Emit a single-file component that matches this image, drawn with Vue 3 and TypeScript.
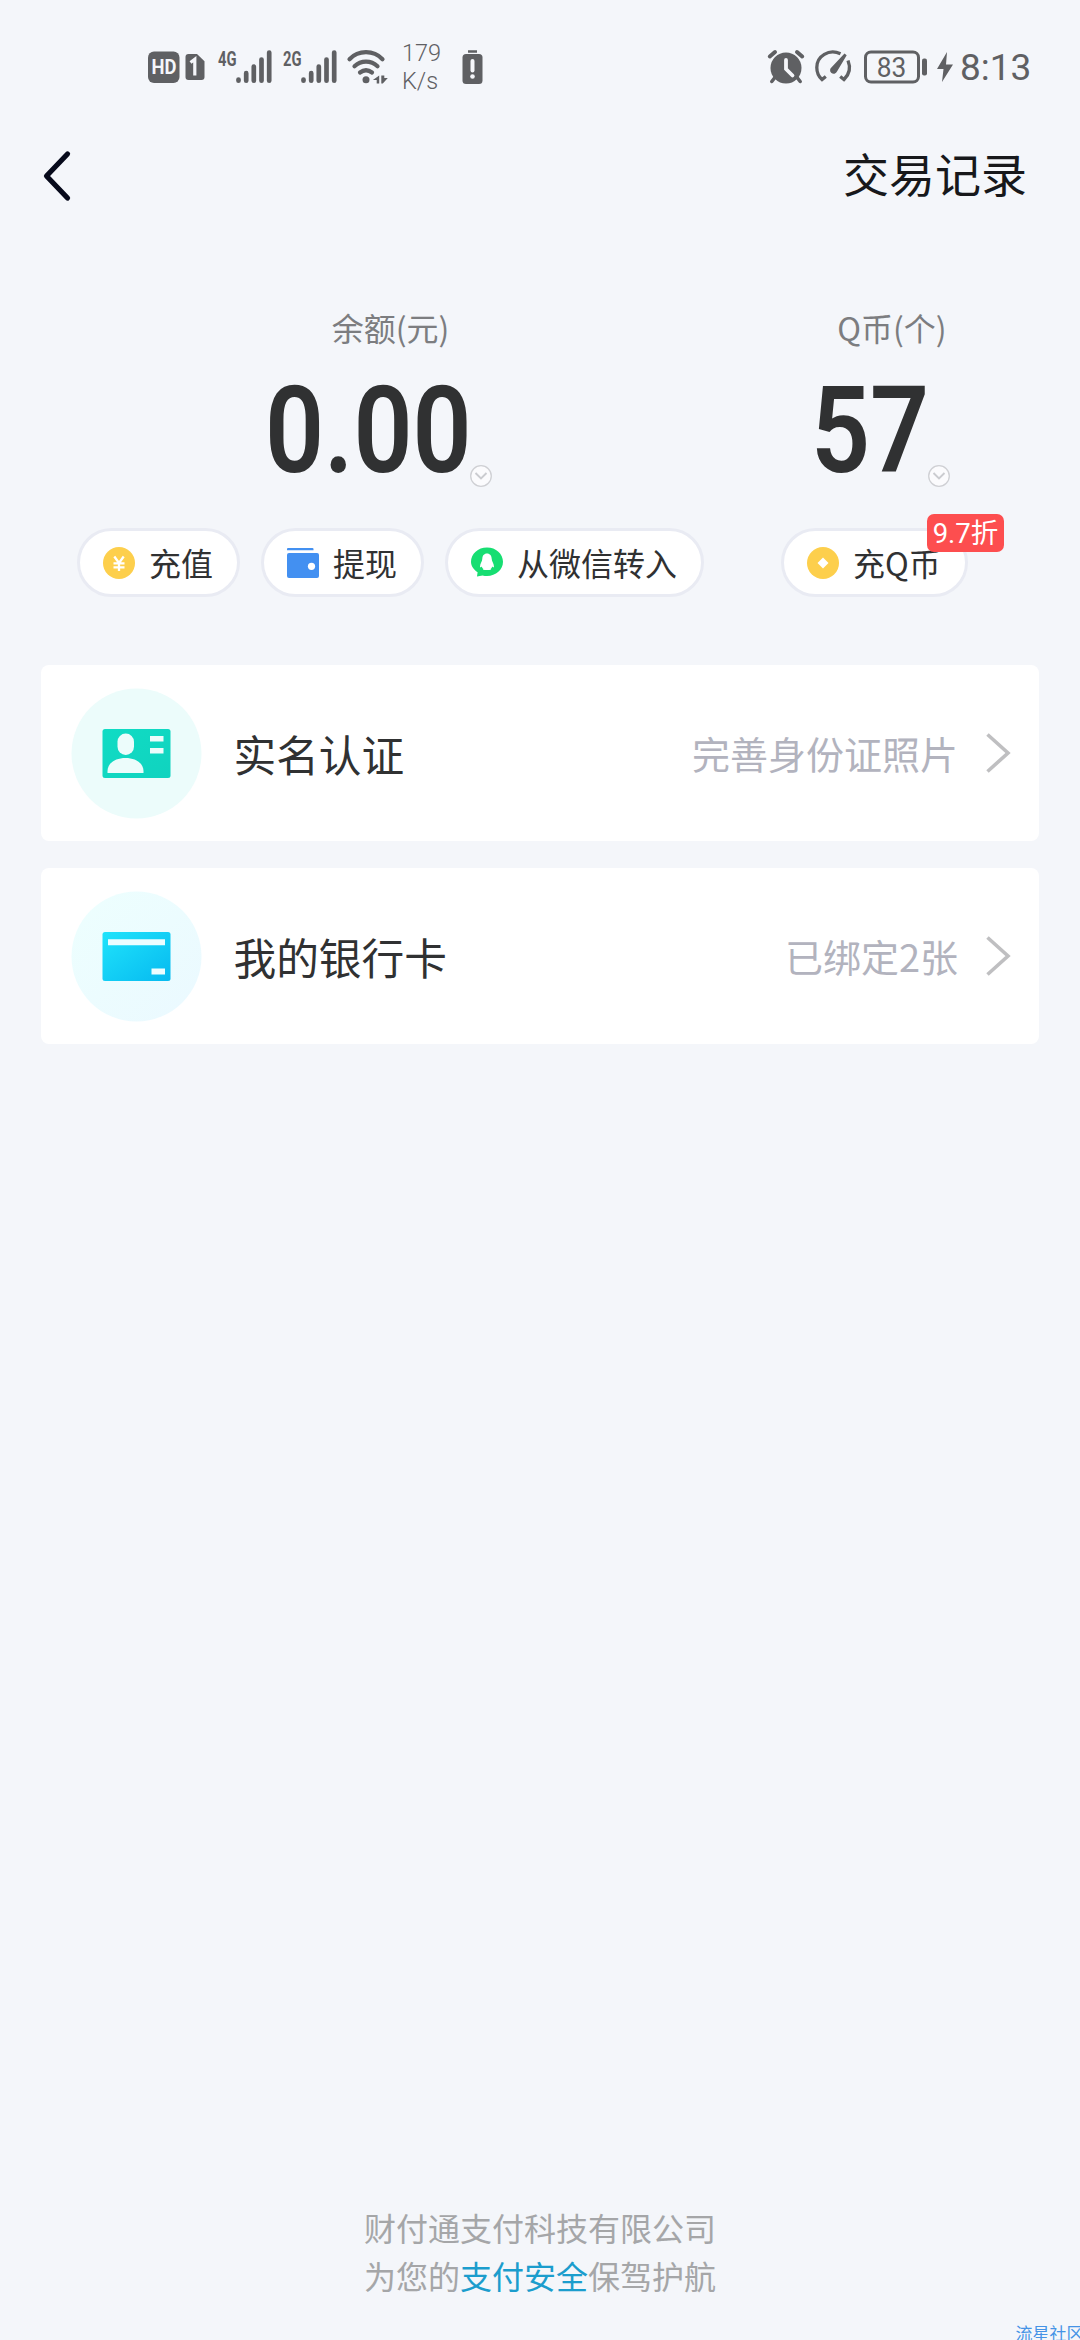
<script setup lang="ts">
interface Row {
  kind: 'id' | 'card'
  title: string
  note: string
}

const rows: Row[] = [
  { kind: 'id', title: '实名认证', note: '完善身份证照片' },
  { kind: 'card', title: '我的银行卡', note: '已绑定2张' },
]
</script>

<template>
  <div class="page">
    <header class="status">
      <div class="status-left">
        <svg class="hd" width="57" height="32" viewBox="0 0 57 32">
          <rect x="0" y="0.5" width="31.5" height="31.5" rx="6" fill="#5f6063" />
          <text x="3.6" y="23.2" textLength="25" lengthAdjust="spacingAndGlyphs" class="svg-bold" font-size="20.5" fill="#f5f6fa">HD</text>
          <path d="M40.5 3h8.5l7.5 7.200V26a3 3 0 0 1-3 3H40.500a3 3 0 0 1-3-3V6a3 3 0 0 1 3-3z" fill="#5f6063" />
          <path d="M42.500 11.500l4.300-3.200V24.500" fill="none" stroke="#f5f6fa" stroke-width="3.200" />
        </svg>
        <svg v-for="g in ['4G', '2G']" :key="g" class="signal" width="54" height="34" viewBox="0 0 54 34">
          <text x="0" y="15.500" textLength="18.500" lengthAdjust="spacingAndGlyphs" class="svg-bold" font-size="20.500" fill="#5f6063">{{ g }}</text>
          <g stroke="#5f6063" stroke-width="4.700" stroke-linecap="round">
            <path d="M20.500 29.500v1.200M28.200 23.200v7.500M35.800 16.500v14.200M43.500 9.500v21.200M51.200 2.500v28.200" />
          </g>
        </svg>
        <svg class="wifi" width="41" height="34" viewBox="0 0 41 34">
          <g fill="none" stroke="#5f6063" stroke-width="4.200" stroke-linecap="round">
            <path d="M2.500 9.200C11.500-.200 26.500-.200 35.500 9.200" />
            <path d="M7.500 16.200c6.500-6.200 16.500-6.200 23 0" />
            <path d="M13 22.500c4-3 8-3 12 0" />
          </g>
          <circle cx="19" cy="29.700" r="3.500" fill="#5f6063" />
          <path d="M32.200 25.500v8h-2.500v-3.500h-3.800zM34.300 25.500v8h1.500l5-5.500h-3.500v-2.500z" fill="#5f6063" />
        </svg>
        <div class="speed"><span>179</span><span>K/s</span></div>
        <svg class="lowbat" width="21" height="34" viewBox="0 0 21 34">
          <path d="M6 1.500h9" stroke="#5f6063" stroke-width="2.500" />
          <rect x="0.500" y="4" width="20" height="30" rx="3.500" fill="#5f6063" />
          <path d="M10.500 11v9.500" stroke="#f5f6fa" stroke-width="4" stroke-linecap="round" />
          <circle cx="10.500" cy="26.500" r="2.300" fill="#f5f6fa" />
        </svg>
      </div>
      <div class="status-right">
        <svg width="36" height="34" viewBox="0 0 36 34">
          <circle cx="18" cy="18" r="15.500" fill="#5f6063" />
          <path d="M1.800 6.500L7 2M29 2l5.200 4.500" stroke="#5f6063" stroke-width="4" stroke-linecap="round" />
          <path d="M6.500 28l-2.700 3.500M29.500 28l2.700 3.500" stroke="#5f6063" stroke-width="3.500" stroke-linecap="round" />
          <path d="M18 10v9l6.500 6.500" fill="none" stroke="#f5f6fa" stroke-width="3.800" stroke-linecap="round" />
        </svg>
        <svg class="gauge" width="36" height="34" viewBox="0 0 36 34">
          <g fill="none" stroke="#5f6063" stroke-width="3.300">
            <path d="M25.500 3.800C14-1.500 1.800 6 1.800 17.500c0 4.800 1.800 9 5.200 12l3.800-3" />
            <path d="M33 10.500c2.800 7 1.200 14-4 19l-3.800-3" />
          </g>
          <path d="M29.500 3.500l2.200 1.800L22 21.500a3.600 3.600 0 1 1-5.400-4.300z" fill="#5f6063" />
        </svg>
        <svg class="battery" width="64" height="34" viewBox="0 0 64 34">
          <rect x="1.500" y="2" width="53" height="30" rx="5.500" fill="none" stroke="#5f6063" stroke-width="3" />
          <rect x="58" y="8.500" width="5" height="17" rx="2" fill="#5f6063" />
          <text x="12.800" y="26.800" textLength="29.500" lengthAdjust="spacingAndGlyphs" class="svg-text" font-size="27.500" fill="#5f6063">83</text>
        </svg>
        <svg class="bolt" width="16" height="30" viewBox="0 0 16 30">
          <path d="M10 0L0 17h6.500L5 30 16 12.500H9z" fill="#5f6063" />
        </svg>
        <span class="clock">8:13</span>
      </div>
    </header>

    <nav class="nav">
      <svg class="back" width="26" height="48" viewBox="0 0 26 48">
        <path d="M24.500 2L3.500 24l21 22" fill="none" stroke="#070a1b" stroke-width="5.200" stroke-linecap="round" stroke-linejoin="round" />
      </svg>
      <span class="nav-title">交易记录</span>
    </nav>

    <section class="assets">
      <div class="asset asset-cash">
        <span class="asset-label">余额(元)</span>
        <div class="asset-value">
          <span class="digits"><b>0.00</b></span>
          <svg class="more" width="22" height="22" viewBox="0 0 22 22">
            <circle cx="11" cy="11" r="10.300" fill="#fbfbfd" stroke="#cfd0d4" stroke-width="1.300" />
            <path d="M5.500 8l5.500 5.500L16.500 8" fill="none" stroke="#cbccd0" stroke-width="1.900" />
          </svg>
        </div>
        <div class="actions">
          <button class="pill">
            <svg width="32" height="32" viewBox="0 0 32 32">
              <circle cx="16" cy="16" r="16" fill="#fdcf4c" />
              <path d="M11.300 9.500l4.700 6.500 4.700-6.500M16 15v9M10.500 16.300h11M10.500 20.300h11" fill="none" stroke="#fff" stroke-width="2.300" />
            </svg>
            <span>充值</span>
          </button>
          <button class="pill">
            <svg width="32" height="32" viewBox="0 0 32 32">
              <path d="M1 1h24.500a1 1 0 0 1 1 1v1.200H0V2a1 1 0 0 1 1-1z" fill="#4390f1" />
              <rect x="0" y="6" width="32" height="25" rx="2" fill="#4390f1" />
              <circle cx="24.500" cy="19.300" r="3.600" fill="#fff" />
            </svg>
            <span>提现</span>
          </button>
          <button class="pill pill-wide">
            <svg width="32" height="32" viewBox="0 0 32 32">
              <path d="M16 .500c9 0 16 6.300 16 14.300S25 29 16 29c-1.500 0-3-.200-4.500-.600L6 29.500l.600-4.300C2.500 22.700 0 19 0 14.800 0 6.800 7 .500 16 .500z" fill="#17de72" />
              <path d="M16 6.500c-3 0-4.700 2.300-4.700 5.300 0 2.500-2.300 5-2.300 8 0 .800.700.800 1.800-.300.300 1.200.800 1.800 1.500 2.300-.600.700-.700 1.200 1.500 1.200h4.400c2.200 0 2.100-.500 1.500-1.200.700-.500 1.200-1.100 1.500-2.300 1.100 1.100 1.800 1.100 1.800.300 0-3-2.300-5.500-2.300-8 0-3-1.700-5.300-4.700-5.300z" fill="#fff" />
            </svg>
            <span>从微信转入</span>
          </button>
        </div>
      </div>

      <div class="asset asset-coin">
        <span class="asset-label">Q币(个)</span>
        <div class="asset-value">
          <span class="digits"><b>57</b></span>
          <svg class="more" width="22" height="22" viewBox="0 0 22 22">
            <circle cx="11" cy="11" r="10.300" fill="#fbfbfd" stroke="#cfd0d4" stroke-width="1.300" />
            <path d="M5.500 8l5.500 5.500L16.500 8" fill="none" stroke="#cbccd0" stroke-width="1.900" />
          </svg>
        </div>
        <div class="actions">
          <button class="pill pill-coin">
            <svg width="32" height="32" viewBox="0 0 32 32">
              <circle cx="16" cy="16" r="16" fill="#fdcf4c" />
              <path d="M16 10.500l5.500 5.500-5.500 5.500-5.500-5.500z" fill="#fff" />
            </svg>
            <span>充Q币</span>
            <em class="badge">9.7折</em>
          </button>
        </div>
      </div>
    </section>

    <main class="rows">
      <div v-for="row in rows" :key="row.title" class="row">
        <svg class="row-icon" width="131" height="131" viewBox="0 0 131 131">
          <defs>
            <linearGradient id="idFill" x1="0" y1="0" x2="1" y2="1">
              <stop offset="0" stop-color="#10dcc4" />
              <stop offset="1" stop-color="#10d3bf" />
            </linearGradient>
            <linearGradient id="cardFill" x1="0" y1="0" x2="1" y2="1">
              <stop offset="0" stop-color="#20e3fb" />
              <stop offset="1" stop-color="#06baf0" />
            </linearGradient>
            <linearGradient id="cardBg" x1="0" y1="0" x2="1" y2="1">
              <stop offset="0" stop-color="#edfffe" />
              <stop offset="1" stop-color="#ebf9ff" />
            </linearGradient>
          </defs>
          <template v-if="row.kind === 'id'">
            <circle cx="65.500" cy="65.500" r="65" fill="#ecfcfb" />
            <rect x="31.500" y="41" width="68" height="49" rx="2.500" fill="url(#idFill)" />
            <rect x="46.500" y="45.500" width="16.500" height="21.500" rx="8.200" fill="#ecfcfb" />
            <path d="M36.500 85v-2c0-7.500 7.500-13 18-13s18 5.500 18 13v2z" fill="#ecfcfb" />
            <path d="M79 50.700h13.500M79 62.700h13.500" stroke="#ecfcfb" stroke-width="5.500" />
          </template>
          <template v-else>
            <circle cx="65.500" cy="65.500" r="65" fill="url(#cardBg)" />
            <rect x="31.500" y="41" width="68" height="49" rx="2.500" fill="url(#cardFill)" />
            <path d="M37 51.300h57M80.500 80.500h13.500" stroke="#ecfdff" stroke-width="6" />
          </template>
        </svg>
        <span class="row-title">{{ row.title }}</span>
        <span class="row-note">{{ row.note }}</span>
        <svg class="row-arrow" width="24" height="40" viewBox="0 0 24 40">
          <path d="M1.500 1.500L22 20 1.500 38.500" fill="none" stroke="#bfbfc1" stroke-width="3.600" />
        </svg>
      </div>
    </main>

    <footer class="footer">
      <p>财付通支付科技有限公司</p>
      <p>为您的<a>支付安全</a>保驾护航</p>
    </footer>
    <span class="watermark">流星社区</span>
  </div>
</template>

<style>
body {
  margin: 0;
  background: #f4f6fa;
}
</style>

<style scoped>
.page {
  position: relative;
  box-sizing: border-box;
  width: 1080px;
  height: 2340px;
  overflow: hidden;
  display: flex;
  flex-direction: column;
  background: #f4f6fa;
  font-family: 'Noto Sans CJK SC', 'Noto Sans', sans-serif;
  color: #303132;
}
svg {
  display: block;
  flex: none;
  overflow: visible;
}
.svg-bold {
  font-family: Roboto, sans-serif;
  font-weight: 700;
}
.svg-text {
  font-family: Roboto, sans-serif;
}
.status {
  display: flex;
  justify-content: space-between;
  height: 134px;
  box-sizing: border-box;
  padding: 0 50px 0 147.500px;
  color: #5f6063;
}
.status-left,
.status-right {
  display: flex;
  align-items: center;
  height: 133px;
}
.status-left .signal {
  margin-left: 13px;
}
.status-left .signal + .signal {
  margin-left: 11.500px;
}
.wifi {
  margin-left: 10px;
}
.speed {
  display: flex;
  flex-direction: column;
  width: 60px;
  margin-left: 14px;
  font: 300 23.500px/28px Roboto, sans-serif;
}
.speed span {
  white-space: nowrap;
}
.lowbat {
  margin-left: 0;
}
.gauge {
  margin-left: 11px;
}
.battery {
  margin-left: 13px;
}
.bolt {
  margin-left: 9px;
}
.clock {
  width: 70px;
  margin-left: 7px;
  padding-top: 3px;
  font: 400 37px/40px Roboto, sans-serif;
  white-space: nowrap;
}
.nav {
  display: flex;
  align-items: center;
  justify-content: space-between;
  height: 84px;
  padding: 0 53px 0 43px;
}
.nav-title {
  padding-bottom: 9px;
  font-size: 46px;
  line-height: 60px;
  color: #17181b;
}
.assets {
  display: flex;
  gap: 77px;
  margin-top: 85px;
  padding-left: 77px;
}
.asset {
  display: flex;
  flex-direction: column;
}
.asset-cash {
  width: 627px;
}
.asset-coin {
  width: 222px;
}
.asset-label {
  align-self: center;
  font-size: 32px;
  line-height: 48px;
  color: #7c7d80;
}
.asset-value {
  display: flex;
  align-items: flex-end;
  height: 136px;
}
.asset-cash .asset-value {
  padding-left: 187.500px;
}
.asset-coin .asset-value {
  padding-left: 30px;
}
.digits {
  width: 205.500px;
  height: 135px;
}
.asset-coin .digits {
  width: 117px;
}
.digits b {
  display: block;
  font: 600 121px/158px Roboto, sans-serif;
  transform: scaleX(0.855);
  transform-origin: left;
  white-space: nowrap;
}
.actions {
  display: flex;
  gap: 21px;
  margin-top: 41px;
}
.pill {
  position: relative;
  display: flex;
  align-items: center;
  gap: 14px;
  box-sizing: border-box;
  width: 163px;
  height: 69px;
  padding: 0 0 0 23px;
  border: 3px solid #e9ebf3;
  border-radius: 35px;
  background: #fff;
  font-family: inherit;
  font-size: 32px;
  line-height: 46px;
  color: #303132;
  white-space: nowrap;
}
.pill span {
  padding-bottom: 2px;
}
.pill-wide {
  width: 259px;
}
.pill-coin {
  width: 187px;
}
.badge {
  position: absolute;
  top: -17px;
  left: 143px;
  width: 77px;
  height: 38px;
  border-radius: 7px;
  background: #fd4e4f;
  font: normal 400 27.500px/40px Roboto, 'Noto Sans CJK SC', sans-serif;
  color: #fff;
  text-align: center;
}
.rows {
  display: flex;
  flex-direction: column;
  gap: 27px;
  margin: 68px 41px 0;
}
.row {
  display: flex;
  align-items: center;
  height: 176px;
  box-sizing: border-box;
  padding: 0 29.500px;
  border-radius: 8px;
  background: #fff;
}
.row-title {
  flex: 1;
  margin-left: 32px;
  font-size: 42.700px;
  line-height: 60px;
}
.row-note {
  font-size: 38px;
  line-height: 56px;
  color: #b2b3be;
}
.row-arrow {
  margin-left: 27.500px;
}
.footer {
  margin-top: auto;
  padding-bottom: 41px;
  text-align: center;
  font-size: 32px;
  line-height: 48px;
  color: #a5a6a8;
}
.footer p {
  margin: 0;
}
.footer a {
  color: #1b9dcd;
}
.watermark {
  position: absolute;
  left: 1015.500px;
  top: 2320px;
  font-size: 17px;
  line-height: 25px;
  color: #4593e6;
  white-space: nowrap;
}
</style>
